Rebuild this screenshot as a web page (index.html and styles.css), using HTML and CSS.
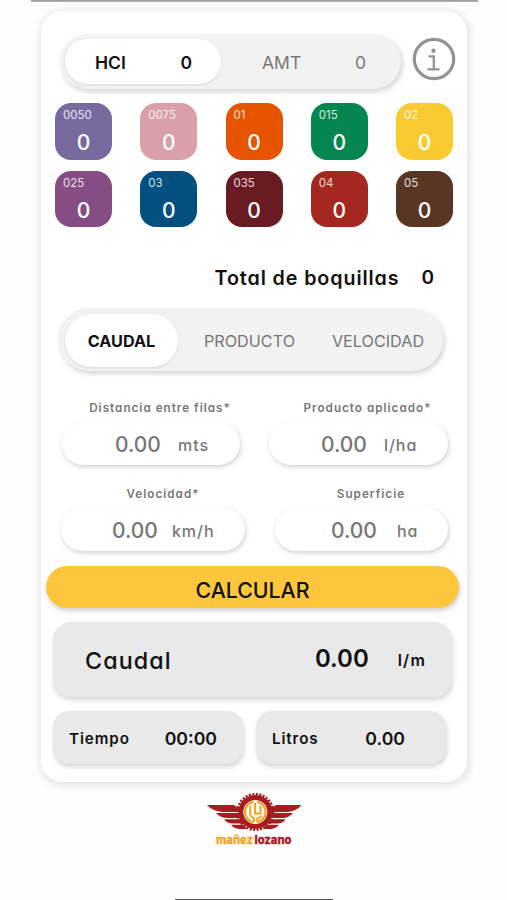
FILE: index.html
```html
<!DOCTYPE html>
<html lang="es">
<head>
  <meta charset="UTF-8" />
  <meta name="viewport" content="width=device-width, initial-scale=1.0"/>
  <title>Calculadora de boquillas</title>
  <link rel="stylesheet" href="styles.css">
</head>
<body>
  <div class="top-line"></div>

  <main class="card">
    <!-- Tipo de boquilla -->
    <header class="header">
      <div class="type-switch">
        <div class="type active"><span>HCI</span><span>0</span></div>
        <div class="type"><span>AMT</span><span>0</span></div>
      </div>
      <svg class="info" viewBox="0 0 44 44" fill="none" stroke="#929292">
        <circle cx="22" cy="22" r="19.7" stroke-width="3.2"/>
        <circle cx="21.5" cy="13.8" r="2.2" fill="#929292" stroke="none"/>
        <path d="M16.5 19.3h5.3v13M15.5 32.3h12" stroke-width="2.3"/>
      </svg>
    </header>

    <!-- Boquillas -->
    <section class="nozzles">
      <div class="nozzle lilac"><small>0050</small><span>0</span></div>
      <div class="nozzle pink"><small>0075</small><span>0</span></div>
      <div class="nozzle orange"><small>01</small><span>0</span></div>
      <div class="nozzle green"><small>015</small><span>0</span></div>
      <div class="nozzle yellow"><small>02</small><span>0</span></div>
      <div class="nozzle purple"><small>025</small><span>0</span></div>
      <div class="nozzle blue"><small>03</small><span>0</span></div>
      <div class="nozzle maroon"><small>035</small><span>0</span></div>
      <div class="nozzle red"><small>04</small><span>0</span></div>
      <div class="nozzle brown"><small>05</small><span>0</span></div>
    </section>

    <div class="total"><span class="total-label">Total de boquillas</span><span>0</span></div>

    <nav class="tabs">
      <div class="tab active">CAUDAL</div>
      <div class="tab">PRODUCTO</div>
      <div class="tab">VELOCIDAD</div>
    </nav>

    <!-- Datos -->
    <section class="fields">
      <div class="field distance">
        <label>Distancia entre filas*</label>
        <div class="input"><span class="value">0.00</span><span class="unit">mts</span></div>
      </div>
      <div class="field product">
        <label>Producto aplicado*</label>
        <div class="input"><span class="value">0.00</span><span class="unit">l/ha</span></div>
      </div>
    </section>
    <section class="fields">
      <div class="field speed">
        <label>Velocidad*</label>
        <div class="input"><span class="value">0.00</span><span class="unit">km/h</span></div>
      </div>
      <div class="field area">
        <label>Superficie</label>
        <div class="input"><span class="value">0.00</span><span class="unit">ha</span></div>
      </div>
    </section>

    <button class="btn">CALCULAR</button>

    <!-- Resultados -->
    <section class="result">
      <span class="result-name">Caudal</span>
      <span class="result-value">0.00</span>
      <span class="result-unit">l/m</span>
    </section>
    <section class="extras">
      <div class="extra time"><span class="extra-name">Tiempo</span><span class="extra-value">00:00</span></div>
      <div class="extra liters"><span class="extra-name">Litros</span><span class="extra-value">0.00</span></div>
    </section>
  </main>

  <footer class="footer">
    <svg class="logo" viewBox="0 0 96 56">
      <g fill="#a81b20">
        <path d="M1 13H28L35 18V20H17Q6 19 1 13ZM10 21H35V26H22Q14 26 10 21ZM18 27.2H35L37 31.5H27Q21 31.5 18 27.2ZM25 32.7H38L41 37H33Q28 36.5 25 32.7Z"/>
        <path d="M95.5 13H70L63 18V20H81Q91 19 95.5 13ZM87 21H63V26H76Q83 26 87 21ZM79.5 27.2H63L61 31.5H71Q77 31.5 79.5 27.2ZM73 32.7H60L57 37H65Q70 36.5 73 32.7Z"/>
        <circle cx="49.3" cy="20" r="17"/>
      </g>
      <circle cx="49.3" cy="20" r="17.8" fill="none" stroke="#a81b20" stroke-width="2.6" stroke-dasharray="2 1.495"/>
      <circle cx="49.3" cy="20" r="12" fill="#fffaf0"/>
      <g fill="none" stroke="#eea52c" stroke-width="2.2">
        <path d="M47.5 9.6A10.6 10.6 0 0 0 47.5 30.4M51.1 9.6A10.6 10.6 0 0 1 51.1 30.4"/>
        <path d="M49 11V21.5H54.5V14M44.2 14V21Q44.2 25 48 26.2V30M55.5 24Q54 26 51.2 26.4V30" stroke-width="2"/>
      </g>
      <text x="10" y="52" textLength="37" lengthAdjust="spacingAndGlyphs" fill="#eea52c" stroke="#eea52c">mañez</text>
      <text x="48.5" y="52" textLength="37" lengthAdjust="spacingAndGlyphs" fill="#a81b20" stroke="#a81b20">lozano</text>
    </svg>
    <div class="home-bar"></div>
  </footer>
</body>
</html>
```
FILE: styles.css
```css
* {
  box-sizing: border-box;
}

body {
  margin: 0;
  height: 900px;
  overflow: hidden;
  display: flex;
  flex-direction: column;
  font-family: Inter, sans-serif;
  background: #fefefe;
  color: #111;
}

.top-line {
  width: 447px;
  height: 2px;
  margin: 0 0 9px 31px;
  flex: none;
  background: linear-gradient(#999, #b5b5b5);
}

.card {
  width: 426px;
  height: 771px;
  flex: none;
  margin-left: 41px;
  padding-top: 23px;
  border-radius: 21px;
  background: #fff;
  box-shadow: 1px 2px 9px 2px rgba(0,0,0,0.11);
}

.header {
  display: flex;
  gap: 11px;
  padding-left: 19px;
}

.type-switch {
  display: flex;
  width: 341px;
  height: 55px;
  padding: 5px;
  border-radius: 28px;
  background: #f2f2f2;
  box-shadow: 2px 3px 5px rgba(0,0,0,0.16);
}

.type {
  flex: 1;
  display: flex;
  justify-content: space-between;
  align-items: center;
  padding: 2px 30px 0 41px;
  font-size: 17.5px;
  color: #777;
}

.type.active {
  flex: none;
  width: 156px;
  padding: 2px 29px 0 30px;
  border-radius: 23px;
  background: #fff;
  color: #111;
  font-weight: 600;
  box-shadow: 0 1px 3px rgba(0,0,0,0.1);
}

.info {
  width: 44px;
  height: 44px;
  margin-top: 3px;
}

.nozzles {
  display: grid;
  grid-template-columns: repeat(5, 57px);
  gap: 11px 28.25px;
  margin: 14px 0 0 14px;
}

.nozzle {
  height: 56.5px;
  padding-top: 5px;
  border-radius: 16px;
  color: #fff;
}

.nozzle small {
  display: block;
  padding-left: 8px;
  font-size: 11.5px;
  line-height: 14px;
  opacity: 0.82;
}

.nozzle span {
  display: block;
  text-align: center;
  font-size: 21px;
  font-weight: 500;
  line-height: 26px;
  margin-top: 8px;
}

.lilac { background: #786a9e; }
.pink { background: #d9a0a9; }
.orange { background: #e65400; }
.green { background: #058550; }
.yellow { background: #f8cc30; }
.purple { background: #864d85; }
.blue { background: #02507f; }
.maroon { background: #6a1a23; }
.red { background: #a52820; }
.brown { background: #583623; }

.total {
  display: flex;
  justify-content: flex-end;
  gap: 22px;
  margin-top: 38px;
  padding-right: 33px;
  font-size: 19px;
  font-weight: 600;
  line-height: 26px;
}

.total-label,
.field label,
.unit,
.result-name,
.result-unit,
.extra-name {
  font-feature-settings: "cv11";
}

.total-label {
  font-size: 19.7px;
  letter-spacing: 0.9px;
}

.tabs {
  display: flex;
  width: 385px;
  height: 63px;
  margin: 17px 0 0 17px;
  padding: 6px 7px 4px;
  border-radius: 32px;
  background: #f2f2f2;
  box-shadow: 2px 3px 5px rgba(0,0,0,0.16);
}

.tab {
  width: 143px;
  display: flex;
  align-items: center;
  justify-content: center;
  font-size: 16.2px;
  color: #777;
}

.tab.active {
  width: 113px;
  border-radius: 27px;
  background: #fff;
  color: #111;
  font-weight: 700;
  box-shadow: 0 1px 3px rgba(0,0,0,0.1);
}

.tab:last-child {
  width: 114px;
}

.fields {
  display: flex;
  justify-content: space-between;
  padding: 0 19px 0 21px;
  margin-top: 29px;
}

.fields + .fields {
  margin-top: 21px;
  padding-left: 20px;
}

.field label {
  display: block;
  height: 22px;
  line-height: 17px;
  text-align: center;
  white-space: nowrap;
  font-size: 11.7px;
  font-weight: 600;
  letter-spacing: 1px;
  color: #777;
}

.input {
  display: flex;
  align-items: center;
  height: 43px;
  border-radius: 22px;
  background: #fff;
  box-shadow: 1px 2px 5px rgba(0,0,0,0.18);
  color: #777;
}

.value {
  padding-top: 1px;
  font-size: 21px;
  font-weight: 500;
}

.unit {
  padding-top: 2px;
  font-size: 16px;
  font-weight: 500;
  letter-spacing: 1px;
}

.distance { width: 178px; }
.distance label { padding-left: 18px; }
.distance .input { padding-left: 53px; gap: 17px; }
.product { width: 179px; }
.product label { padding-left: 18px; }
.product .input { padding-left: 52px; gap: 17px; }
.speed { width: 184px; }
.speed label { padding-left: 20px; }
.speed .input { padding-left: 51px; gap: 14px; }
.area { width: 173px; }
.area label { padding-left: 19px; }
.area .input { padding-left: 56px; gap: 20px; }

.btn {
  display: block;
  width: 413px;
  height: 42px;
  margin: 15px 0 0 5px;
  padding: 6px 0 0;
  border: none;
  border-radius: 21px;
  background: #fec63d;
  color: #111;
  font-family: inherit;
  font-size: 21.3px;
  font-weight: 500;
  box-shadow: 1px 3px 5px rgba(0,0,0,0.18);
}

.result {
  display: flex;
  align-items: center;
  width: 399px;
  height: 75px;
  margin: 14px 0 0 12px;
  padding: 0 26px 0 32px;
  border-radius: 18px;
  background: #e9e9e9;
  box-shadow: 1px 3px 5px rgba(0,0,0,0.16);
}

.result-name {
  flex: 1;
  padding-top: 2px;
  font-size: 23.3px;
  font-weight: 500;
  letter-spacing: 1.1px;
}

.result-value {
  margin-right: 29px;
  padding-bottom: 2px;
  font-size: 24px;
  font-weight: 600;
}

.result-unit {
  font-size: 16px;
  font-weight: 600;
  letter-spacing: 1.2px;
}

.extras {
  display: flex;
  gap: 13px;
  margin: 14px 0 0 12px;
}

.extra {
  display: flex;
  align-items: center;
  justify-content: space-between;
  width: 190px;
  height: 53px;
  padding: 1px 26px 0 16px;
  border-radius: 16px;
  background: #e9e9e9;
  box-shadow: 1px 3px 5px rgba(0,0,0,0.16);
}

.extra.liters {
  padding-right: 41px;
}

.extra-name {
  padding-top: 1px;
  font-size: 15.2px;
  font-weight: 600;
  letter-spacing: 0.9px;
}

.extra-value {
  font-size: 17.7px;
  font-weight: 600;
}

.footer {
  display: flex;
  flex-direction: column;
  flex: 1;
  padding-top: 10px;
}

.logo {
  width: 96px;
  height: 56px;
  margin-left: 206px;
}

.logo text {
  font-size: 11.5px;
  font-weight: 800;
  stroke-width: 0.3;
}

.home-bar {
  width: 158px;
  height: 1px;
  margin: auto 0 0 175px;
  background: #555;
}
```
